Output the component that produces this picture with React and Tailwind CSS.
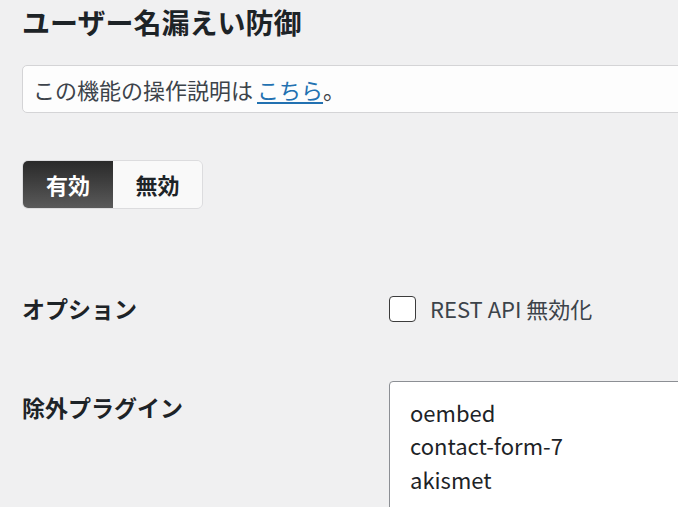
import { useState } from "react";

const font = { fontFamily: '"Noto Sans CJK JP", "Noto Sans", sans-serif' };

export default function App() {
  const [enabled, setEnabled] = useState(true);
  const [restOff, setRestOff] = useState(false);

  return (
    <div
      className="w-[678px] h-[507px] overflow-hidden bg-[#f0f0f1] pl-[22px] text-[#1d2327]"
      style={font}
    >
      {/* TITLE */}
      <h1 className="text-[28px] font-bold leading-[44px] whitespace-nowrap">
        ユーザー名漏えい防御
      </h1>

      {/* NOTICE */}
      <div className="mt-[21px] w-[700px] h-[48px] flex items-center bg-[#fdfdfd] border border-[#d4d4d6] rounded-[5px] pl-[10px] text-[22px] text-[#3c434a] whitespace-nowrap">
        この機能の操作説明は
        <a href="#" className="ml-[4px] text-[#2271b1] underline underline-offset-[3px]">
          こちら
        </a>
        。
      </div>

      {/* TOGGLE */}
      <div className="mt-[47px] flex w-fit h-[49px] rounded-[6px] border border-[#dcdcde] overflow-hidden">
        <button
          onClick={() => setEnabled(true)}
          className={`w-[90px] text-[22px] font-bold ${
            enabled
              ? "bg-gradient-to-b from-[#2a2a2a] to-[#5a5a5a] text-white"
              : "bg-[#f9f9f9] text-[#1d2327]"
          }`}
        >
          有効
        </button>
        <button
          onClick={() => setEnabled(false)}
          className={`w-[89px] text-[22px] font-bold ${
            !enabled
              ? "bg-gradient-to-b from-[#2a2a2a] to-[#5a5a5a] text-white"
              : "bg-[#f9f9f9] text-[#1d2327]"
          }`}
        >
          無効
        </button>
      </div>

      {/* OPTIONS */}
      <div className="mt-[86px] grid grid-cols-[367px_1fr] items-center h-[27px]">
        <div className="text-[23px] font-bold leading-[27px] whitespace-nowrap">オプション</div>
        <label className="flex items-center gap-[14px] whitespace-nowrap">
          <input
            type="checkbox"
            checked={restOff}
            onChange={() => setRestOff(!restOff)}
            className="appearance-none w-[27px] h-[26px] bg-white border border-[#3c3c3c] rounded-[4px]"
          />
          <span className="text-[22px] leading-[27px] text-[#3c434a]">REST API 無効化</span>
        </label>
      </div>

      {/* EXCLUDED PLUGINS */}
      <div className="mt-[59px] grid grid-cols-[367px_1fr]">
        <div className="pt-[11px] text-[23px] font-bold leading-[30px] whitespace-nowrap">除外プラグイン</div>
        <textarea
          readOnly
          className="w-[400px] h-[200px] bg-white border border-[#8c8f94] rounded-[4px] pt-[14px] pl-[20px] text-[22px] leading-[33.4px] text-[#1d2327] resize-none outline-none"
          value={"oembed\ncontact-form-7\nakismet"}
        />
      </div>
    </div>
  );
}
